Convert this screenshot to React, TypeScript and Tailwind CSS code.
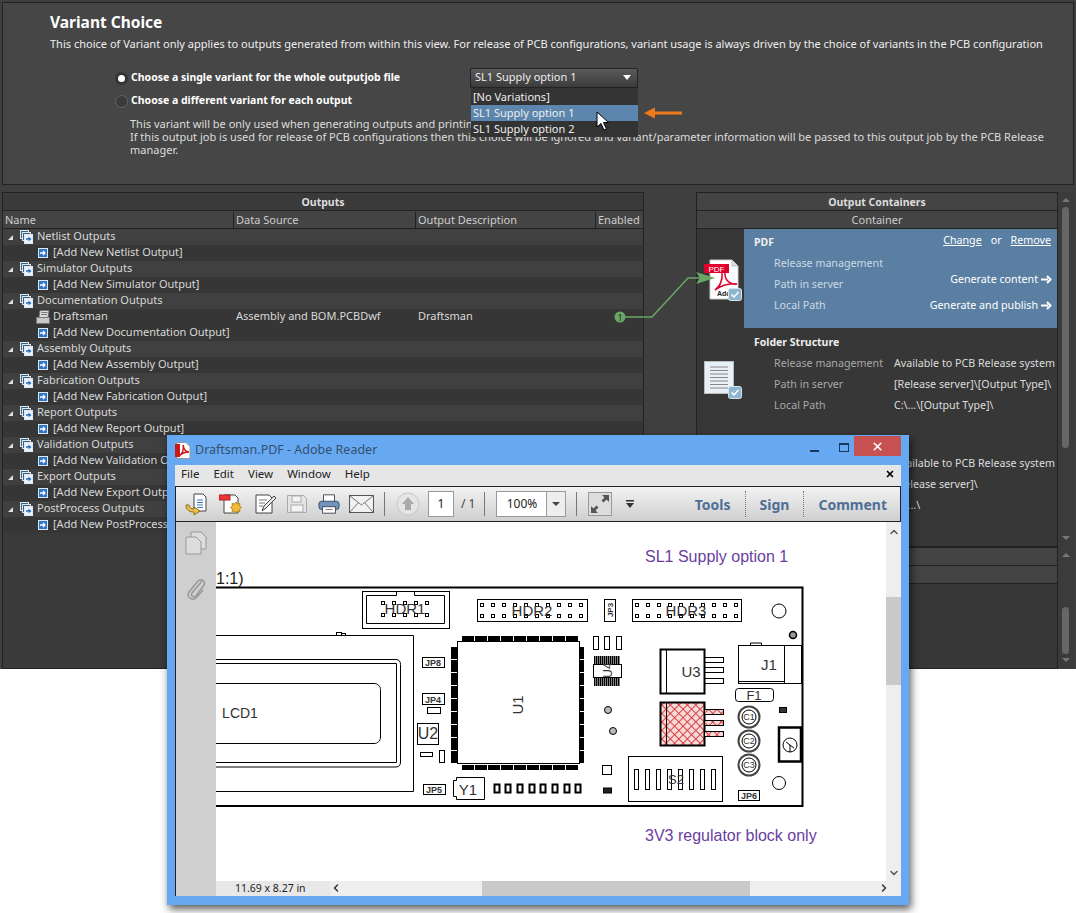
import { ChevronDown, ChevronLeft, ChevronRight, ChevronUp, X } from 'lucide-react';

const font = 'font-["Noto_Sans",sans-serif]';

const outputGroups = [
  { name: 'Netlist Outputs', add: '[Add New Netlist Output]' },
  { name: 'Simulator Outputs', add: '[Add New Simulator Output]' },
  { name: 'Documentation Outputs', add: '[Add New Documentation Output]', draftsman: true },
  { name: 'Assembly Outputs', add: '[Add New Assembly Output]' },
  { name: 'Fabrication Outputs', add: '[Add New Fabrication Output]' },
  { name: 'Report Outputs', add: '[Add New Report Output]' },
  { name: 'Validation Outputs', add: '[Add New Validation Output]' },
  { name: 'Export Outputs', add: '[Add New Export Output]' },
  { name: 'PostProcess Outputs', add: '[Add New PostProcess Output]' },
];

const GroupIcon = () => (
  <svg width="13" height="14" viewBox="0 0 13 14" className="shrink-0">
    <rect x="0.5" y="0.5" width="8" height="8" fill="#3c5f86" stroke="#dfe7ef" />
    <rect x="2.5" y="2.5" width="8" height="8" fill="#3c5f86" stroke="#dfe7ef" />
    <rect x="4.5" y="4.5" width="8" height="9" fill="#e8f0f8" stroke="#dfe7ef" />
    <path d="M6 9h4M8.5 7.5 10.5 9l-2 1.5" stroke="#2c6fc0" strokeWidth="1.3" fill="none" />
  </svg>
);

const AddIcon = () => (
  <svg width="10" height="10" viewBox="0 0 10 10" className="shrink-0">
    <rect width="10" height="10" fill="#dce8f5" />
    <rect x="1" y="1" width="8" height="8" fill="#2f76c4" />
    <path d="M2 5h5M5 3l2 2-2 2" stroke="#fff" strokeWidth="1.3" fill="none" />
  </svg>
);

const DraftsmanIcon = () => (
  <svg width="15" height="14" viewBox="0 0 15 14" className="shrink-0">
    <path d="M4 .5h9l-1 7H3z" fill="#ddd" stroke="#777" />
    <path d="M5.5 2.5h6M5 4.5h6" stroke="#777" />
    <rect x="0.5" y="7.5" width="13" height="6" fill="#c8c8c8" stroke="#777" />
  </svg>
);

const CheckBadge = () => (
  <svg width="14" height="13" viewBox="0 0 14 13" className="absolute bottom-0 right-0">
    <rect x="0.5" y="0.5" width="13" height="12" rx="2" fill="#8fb6cf" stroke="#d5e4ee" />
    <path d="M3.5 6.5 6 9l4.5-5" stroke="#fff" strokeWidth="1.5" fill="none" />
  </svg>
);

const PdfFileIcon = () => (
  <div className="relative h-[42px] w-[38px]">
    <svg width="38" height="42" viewBox="0 0 38 42">
      <path d="M6 1h22l6 6v33H6z" fill="#fff" stroke="#ccc" />
      <path d="M28 1v6h6" fill="#ddd" stroke="#bbb" />
      <rect x="0" y="5" width="25" height="9" fill="#e0002b" />
      <text x="12.5" y="12.5" textAnchor="middle" fontSize="8" fill="#fff" fontFamily="Liberation Sans">PDF</text>
      <path d="M11 31c5-3 8-11 7-17 0-3 3-2 3 1 0 6 5 11 12 10-8-1-15 1-22 6z" fill="none" stroke="#e0002b" strokeWidth="1.5" />
      <text x="13" y="37" fontSize="7" fontWeight="700" fill="#222" fontFamily="Liberation Sans">Adob</text>
    </svg>
    <CheckBadge />
  </div>
);

const DocFileIcon = () => (
  <div className="relative h-[38px] w-[38px]">
    <svg width="38" height="38" viewBox="0 0 38 38">
      <rect x="0.5" y="0.5" width="29" height="32" fill="#e9f1f8" stroke="#bbb" />
      <path d="M6 6h18M6 9.5h18M6 13h18M6 16.500h18M6 20h18M6 23.500h18M6 27h18" stroke="#888" />
    </svg>
    <CheckBadge />
  </div>
);

const ArrowRight = () => (
  <svg width="11" height="9" viewBox="0 0 11 9" className="ml-[3px]">
    <path d="M0 4.500h7M6 1l3.500 3.500L6 8" stroke="#fff" strokeWidth="2" fill="none" />
  </svg>
);

const ContainerSection = ({
  title,
  labels,
  values,
  selected,
  icon,
}: {
  title: string;
  labels: string[];
  values: string[];
  selected?: boolean;
  icon: React.ReactNode;
}) => (
  <div className="flex h-[100px] bg-[#373737]">
    <div className="flex w-[47px] shrink-0 items-center justify-center pl-[4px] pt-[2px]">{icon}</div>
    <div className={`relative flex-1 pl-[10px] pt-[3px] ${selected ? 'h-[99px] bg-[#5a7fa3]' : ''}`}>
      <div className="h-[21px] text-[10.500px] font-bold leading-[21px] text-[#eee]">{title}</div>
      <div className="flex flex-col pl-[20px]">
        {values.map((value, i) => (
          <div key={i} className="flex h-[21px] items-center text-[10.700px]">
            <span className={`w-[120px] ${selected ? 'text-[#cdd8e3]' : 'text-[#a8a8a8]'}`}>{labels[i]}</span>
            <span className="whitespace-nowrap text-[#ddd]">{value}</span>
          </div>
        ))}
      </div>
      {selected && (
        <>
          <div className="absolute right-[6px] top-[2px] flex h-[18px] items-center gap-[9px] text-[10.700px] text-white">
            <span className="underline">Change</span>
            <span>or</span>
            <span className="underline">Remove</span>
          </div>
          <div className="absolute right-[5px] top-[42px] flex items-center text-[10.700px] text-white">
            Generate content
            <ArrowRight />
          </div>
          <div className="absolute right-[5px] top-[68px] flex items-center text-[10.700px] text-white">
            Generate and publish
            <ArrowRight />
          </div>
        </>
      )}
    </div>
  </div>
);

const Scrollbar = ({ thumbTop, thumbHeight }: { thumbTop: number; thumbHeight: number }) => (
  <div className="relative w-[16px] shrink-0 bg-[#3b3b3b]">
    <div
      className="absolute left-[4px] w-[7px] rounded bg-[#666]"
      style={{ top: thumbTop, height: thumbHeight }}
    />
    <div className="absolute left-[4px] top-[6px] h-0 w-0 border-x-[4px] border-b-[4px] border-x-transparent border-b-[#777]" />
    <div className="absolute bottom-[7px] left-[4px] h-0 w-0 border-x-[4px] border-t-[4px] border-x-transparent border-t-[#777]" />
  </div>
);

const Board = () => {
  const pads = (x: number, y: number, n: number) =>
    Array.from({ length: n }, (_, i) => (
      <rect key={`${x}-${y}-${i}`} x={x + i * 11 - 1.5} y={y - 1.5} width="3" height="3" fill="#fff" stroke="#000" />
    ));
  const u1Top = [462, 475, 488, 501, 514, 527, 540, 553, 566];
  const u1Side = [647, 660, 673, 686, 699, 712, 725, 738, 751];
  const smalls = [497, 508, 520, 532, 543, 555, 567, 578];
  const slots = [635, 646, 657, 668, 679, 690, 701, 712];
  return (
    <svg width="590" height="224" viewBox="216 585 590 224" className="block" fontFamily="Liberation Sans">
      <defs>
        <pattern id="hatch" width="6" height="6" patternUnits="userSpaceOnUse" patternTransform="rotate(45)">
          <rect width="6" height="6" fill="#f6d9d9" />
          <path d="M0 0H6M0 0V6" stroke="#d9413f" strokeWidth="2" />
        </pattern>
      </defs>
      <g fill="none" stroke="#000">
        <path d="M216 587.500H802.500V806H216" strokeWidth="2" />

        <rect x="362.500" y="591.500" width="87" height="37" />
        <path d="M396.500 591.500v4h-30v28h78v-28h-30v-4" />
        {pads(383, 603, 5)}
        {pads(383, 615, 5)}

        <rect x="477.500" y="599.500" width="110" height="22" />
        {pads(482, 605, 10)}
        {pads(482, 616, 10)}
        <rect x="604.500" y="599.500" width="11" height="22" />
        <rect x="632.500" y="599.500" width="109" height="22" />
        {pads(637, 605, 10)}
        {pads(637, 616, 10)}

        <circle cx="779" cy="611" r="7" />
        <circle cx="793" cy="635" r="3.500" fill="#999" strokeWidth="1.500" />

        <rect x="336.500" y="632.500" width="5" height="3" />
        <rect x="341.500" y="633.500" width="4" height="2" />
        <path d="M216 635.500H413.500V791.500H216" />
        <path d="M216 659.500H396c3 0 4.500 2 4.500 5V762c0 3-1.500 5-4.500 5H216" />
        <path d="M216 663.500H396.500V762.500H216" />
        <path d="M216 683.500H374c4 0 6.500 3 6.500 6V737c0 4-3 6.500-6.500 6.500H216" />

        <rect x="422.500" y="657.500" width="22" height="10" />
        <rect x="422.500" y="693.500" width="22" height="11" />
        <rect x="427.500" y="707.500" width="13" height="6" />
        <rect x="417.500" y="723.500" width="21" height="21" />
        <rect x="420.500" y="752.500" width="12" height="4" />
        <rect x="439.500" y="750.500" width="5" height="12" />
        <rect x="423.500" y="784.500" width="22" height="10" />
        <path d="M453.500 780.500h3v-3h28v22h-28v-3h-3z" />

        <rect x="457.500" y="641.500" width="122" height="122" />

        {smalls.map((x) => (
          <rect key={x} x={x - 2.500} y="784.500" width="5" height="8" strokeWidth="2" />
        ))}
        {[596, 607, 619].map((x) => (
          <rect key={x} x={x - 2.500} y="636.500" width="5" height="13" />
        ))}
        <rect x="593.500" y="664.500" width="28" height="13" />

        <rect x="660.500" y="649.500" width="44" height="44" strokeWidth="2" />
        <path d="M666.500 649v44" />
        {[660, 670, 681].map((y) => (
          <rect key={y} x="704.500" y={y - 2.500} width="19" height="5" />
        ))}
        <rect x="660.500" y="702.500" width="44" height="43" fill="url(#hatch)" strokeWidth="2" />
        <path d="M666.500 702v44" />
        {[712, 723, 734].map((y) => (
          <rect key={y} x="704.500" y={y - 2.500} width="19" height="5" fill="url(#hatch)" />
        ))}

        <rect x="738.500" y="645.500" width="63" height="38" />
        <path d="M784.500 645v38M738 681.500h46M750.500 645v-2h11v2" />
        <rect x="735.500" y="688.500" width="38" height="13" rx="3" />
        {[717, 741, 765].map((y) => (
          <g key={y}>
            <circle cx="749" cy={y} r="10.500" stroke="#444" strokeWidth="2" />
            <circle cx="749" cy={y} r="7" />
          </g>
        ))}
        <rect x="779" y="727.500" width="22" height="34" strokeWidth="2.500" />
        <circle cx="790" cy="745" r="7" />
        <path d="M790 745v7M786 742l8 6" />
        <rect x="779.500" y="707.500" width="7" height="5" fill="#333" />

        <rect x="628.500" y="756.500" width="94" height="45" />
        {slots.map((x) => (
          <rect key={x} x={x - 0.500} y="769.500" width="4" height="20" />
        ))}
        <rect x="738.500" y="790.500" width="21" height="10" />
        <circle cx="779" cy="783" r="6.500" />
        <circle cx="608" cy="710" r="3.500" fill="#bbb" />
        <circle cx="613" cy="731" r="3.500" fill="#bbb" />
        <rect x="602.500" y="765.500" width="9" height="9" />
        <rect x="603.500" y="788" width="8" height="5" fill="#222" />
      </g>

      <g fill="#000">
        {u1Top.map((x) => (
          <g key={x}>
            <rect x={x} y="636" width="12" height="5" />
            <rect x={x} y="765" width="12" height="5" />
          </g>
        ))}
        {u1Side.map((y) => (
          <g key={y}>
            <rect x="451" y={y} width="6" height="12" />
            <rect x="580" y={y} width="4" height="12" />
          </g>
        ))}
        {Array.from({ length: 13 }, (_, i) => (
          <g key={i}>
            <rect x={594 + i * 2} y="656" width="1.500" height="8" />
            <rect x={594 + i * 2} y="678" width="1.500" height="8" />
          </g>
        ))}
      </g>

      <g fill="#333" stroke="none" textAnchor="middle">
        <text x="405" y="614" fontSize="15">HDR1</text>
        <text x="532" y="616" fontSize="15">HDR2</text>
        <text x="686" y="616" fontSize="15">HDR3</text>
        <text x="433" y="666" fontSize="9" fontWeight="700">JP8</text>
        <text x="433" y="703" fontSize="9" fontWeight="700">JP4</text>
        <text x="434" y="793" fontSize="9" fontWeight="700">JP5</text>
        <text x="749" y="799" fontSize="9" fontWeight="700">JP6</text>
        <text x="428" y="739" fontSize="16">U2</text>
        <text x="468" y="795" fontSize="15">Y1</text>
        <text x="691" y="677" fontSize="15">U3</text>
        <text x="769" y="670" fontSize="15">J1</text>
        <text x="754" y="700" fontSize="13">F1</text>
        <text x="676" y="784" fontSize="13">S2</text>
        <text x="240" y="718" fontSize="14">LCD1</text>
        <text x="749" y="720" fontSize="9">C1</text>
        <text x="749" y="744" fontSize="9">C2</text>
        <text x="749" y="768" fontSize="9">C3</text>
        <text transform="translate(523 705) rotate(-90)" fontSize="15">U1</text>
        <text transform="translate(613 610) rotate(-90)" fontSize="8" fontWeight="700">JP3</text>
        <text transform="translate(612 670) rotate(-90)" fontSize="12">U4</text>
      </g>
    </svg>
  );
};

const ToolbarIcons = () => (
  <>
    <svg width="24" height="24" viewBox="0 0 24 24" className="ml-[9px]">
      <path d="M9 2h9l3 3v14H9z" fill="#fff" stroke="#444" />
      <path d="M12 8h6M12 10.500h6M12 13h6M12 15.500h6" stroke="#3a78c2" />
      <path d="M1 13c0 5 3 7 8 7v3l6-4-6-4v2c-3 0-5-1-5-4z" fill="#f0c04a" stroke="#8a6d1f" />
    </svg>
    <svg width="24" height="24" viewBox="0 0 24 24" className="ml-[10px]">
      <path d="M5 3h11l3 3v15H5z" fill="#fff" stroke="#444" />
      <rect x="0" y="3" width="11" height="5" fill="#e33" stroke="#a22" />
      <path d="m18 13 1.500 2 2.500-.5-.5 2.500 2 1.500-2 1.500.5 2.500-2.500-.5-1.500 2-1.500-2-2.500.5.5-2.500-2-1.500 2-1.500-.5-2.500 2.500.5z" fill="#f0b93a" stroke="#b58a1c" transform="translate(-1 -3)" />
    </svg>
    <svg width="24" height="24" viewBox="0 0 24 24" className="ml-[10px]">
      <path d="M3 3h13l3 3v15H3z" fill="#fff" stroke="#444" />
      <path d="M6 8h8M6 11h6M6 14h4" stroke="#777" />
      <path d="m9 19 2-5L21 4l2 2-10 10z" fill="#e8e8e8" stroke="#444" />
    </svg>
    <svg width="22" height="22" viewBox="0 0 22 22" className="ml-[9px]">
      <path d="M1.500 2.500h16l3 3v14h-19z" fill="#e4e4e4" stroke="#aaa" />
      <rect x="6" y="3" width="9" height="6" fill="#f4f4f4" stroke="#aaa" />
      <rect x="5" y="12" width="12" height="7" fill="#f4f4f4" stroke="#aaa" />
    </svg>
    <svg width="22" height="22" viewBox="0 0 24 24" className="ml-[10px]">
      <path d="M6 10V2h12v8" fill="#fff" stroke="#445" />
      <rect x="1" y="9" width="22" height="9" rx="3" fill="#6f93ba" stroke="#334a66" />
      <rect x="5" y="15" width="14" height="7" fill="#fff" stroke="#445" />
      <path d="M8 18h8" stroke="#777" />
    </svg>
    <svg width="25" height="18" viewBox="0 0 25 18" className="ml-[9px]">
      <rect x="0.500" y="0.500" width="24" height="17" fill="#f1f1f1" stroke="#555" />
      <path d="m1 1 11.500 9L24 1M1 17l8-9M24 17l-8-9" stroke="#777" fill="none" />
    </svg>
    <div className="ml-[10px] h-[24px] w-px bg-[#777]" />
    <svg width="24" height="24" viewBox="0 0 24 24" className="ml-[11px]">
      <circle cx="12" cy="12" r="11" fill="#e4e4e4" stroke="#c6c6c6" />
      <path d="M12 5l6 7h-3v6H9v-6H6z" fill="#aaa" />
    </svg>
  </>
);

export default function App() {
  const labels = ['Release management', 'Path in server', 'Local Path'];
  return (
    <div className={`relative h-[913px] w-[1076px] overflow-hidden bg-white ${font}`}>
      <div className="flex h-[669px] flex-col bg-[#3f3f3f] p-[2px] pb-0 text-[11px] text-[#d8d8d8]">
        <section className="relative h-[183px] shrink-0 border border-[#222] bg-[#464646] pl-[47px] pt-[9px]">
          <h1 className="text-[15.500px] font-bold leading-[20px] text-white">Variant Choice</h1>
          <p className="mt-[4px] whitespace-nowrap text-[11.030px] leading-[16px] text-[#eee]">
            This choice of Variant only applies to outputs generated from within this view. For release of PCB
            configurations, variant usage is always driven by the choice of variants in the PCB configuration
          </p>
          <div className="ml-[65px] mt-[18px] flex flex-col gap-[7px] text-[10.500px] font-bold text-white">
            <label className="flex h-[16px] items-center gap-[3px]">
              <span className="flex h-[13px] w-[13px] items-center justify-center rounded-full bg-[#333]">
                <span className="h-[7px] w-[7px] rounded-full bg-white" />
              </span>
              Choose a single variant for the whole outputjob file
            </label>
            <label className="flex h-[16px] items-center gap-[3px]">
              <span className="h-[13px] w-[13px] rounded-full border border-[#666] bg-[#3a3a3a]" />
              Choose a different variant for each output
            </label>
          </div>
          <p className="ml-[80px] mt-[8px] w-[925px] text-[11px] leading-[13px] text-[#ddd]">
            This variant will be only used when generating outputs and printing from within this view.
            <br />
            If this output job is used for release of PCB configurations then this choice will be ignored and
            variant/parameter information will be passed to this output job by the PCB Release manager.
          </p>
        </section>

        <div className="mt-[7px] flex min-h-0 flex-1">
          <section className="flex w-[642px] shrink-0 flex-col border border-[#222] bg-[#3a3a3a]">
            <div className="h-[18px] shrink-0 border-b border-[#222] text-center text-[10.500px] font-bold leading-[19px] text-[#ddd]">
              Outputs
            </div>
            <div className="flex h-[18px] shrink-0 items-center border-b border-[#222] bg-[#444] pt-[2px] text-[11px] text-[#ccc]">
              <span className="w-[230px] pl-[2px]">Name</span>
              <span className="w-[182px] border-l border-[#222] pl-[2px]">Data Source</span>
              <span className="w-[180px] border-l border-[#222] pl-[2px]">Output Description</span>
              <span className="flex-1 border-l border-[#222] pl-[2px]">Enabled</span>
            </div>
            {outputGroups.map((group) => (
              <div key={group.name} className="text-[11px]">
                <div className="flex h-[16px] items-center bg-[#404040] pl-[5px]">
                  <span className="h-0 w-0 border-b-[5px] border-l-[5px] border-b-[#ddd] border-l-transparent" />
                  <span className="ml-[7px] flex"><GroupIcon /></span>
                  <span className="ml-[4px] pb-[2px]">{group.name}</span>
                </div>
                {group.draftsman && (
                  <div className="flex h-[16px] items-center bg-[#363636]">
                    <span className="ml-[33px] flex w-[15px]"><DraftsmanIcon /></span>
                    <span className="ml-[2px] w-[183px] pb-[2px]">Draftsman</span>
                    <span className="w-[182px] pb-[2px]">Assembly and BOM.PCBDwf</span>
                    <span className="pb-[2px]">Draftsman</span>
                  </div>
                )}
                <div className="flex h-[16px] items-center bg-[#363636] pl-[35px]">
                  <AddIcon />
                  <span className="ml-[5px] pb-[2px]">{group.add}</span>
                </div>
              </div>
            ))}
          </section>

          <div className="w-[52px] shrink-0" />

          <div className="flex min-w-0 flex-1 flex-col">
            <div className="flex h-[355px] shrink-0">
              <section className="flex flex-1 flex-col border border-[#222] bg-[#373737]">
                <div className="h-[18px] shrink-0 border-b border-[#222] bg-[#444] text-center text-[10.500px] font-bold leading-[19px] text-[#ddd]">
                  Output Containers
                </div>
                <div className="h-[18px] shrink-0 border-b border-[#222] bg-[#444] text-center text-[11px] leading-[18px] text-[#ccc]">
                  Container
                </div>
                <ContainerSection title="PDF" labels={labels} values={['', '', '']} selected icon={<PdfFileIcon />} />
                <ContainerSection
                  title="Folder Structure"
                  labels={labels}
                  values={['Available to PCB Release system', '[Release server]\\[Output Type]\\', 'C:\\...\\[Output Type]\\']}
                  icon={<DocFileIcon />}
                />
                <ContainerSection
                  title=""
                  labels={['', '', '']}
                  values={['Available to PCB Release system', '[Release server]\\', 'C:\\...\\']}
                  icon={<DocFileIcon />}
                />
              </section>
              <Scrollbar thumbTop={15} thumbHeight={241} />
            </div>
            <div className="flex min-h-0 flex-1">
              <section className="flex flex-1 flex-col border border-[#222] bg-[#373737]">
                <div className="h-[18px] shrink-0 border-b border-[#222] bg-[#444]" />
                <div className="h-[18px] shrink-0 border-b border-[#222] bg-[#444]" />
              </section>
              <Scrollbar thumbTop={60} thumbHeight={47} />
            </div>
          </div>
        </div>
      </div>

      {/* combo box and its open list */}
      <div className="absolute left-[470px] top-[68px] w-[168px] text-[11px] text-[#eee]">
        <div className="flex h-[20px] items-center justify-between rounded-t-[2px] border border-[#222] bg-gradient-to-b from-[#5a5a5a] to-[#3c3c3c] pb-[1px] pl-[4px] pr-[6px]">
          SL1 Supply option 1
          <span className="h-0 w-0 border-x-[4px] border-t-[5px] border-x-transparent border-t-white" />
        </div>
        <div className="ml-px bg-[#333] pt-[1px]">
          <div className="flex h-[16px] items-center pl-[2px]">[No Variations]</div>
          <div className="flex h-[16px] items-center bg-[#5c86ad] pl-[2px]">SL1 Supply option 1</div>
          <div className="flex h-[16px] items-center pl-[2px]">SL1 Supply option 2</div>
        </div>
      </div>
      <svg width="14" height="20" viewBox="0 0 14 20" className="absolute left-[596px] top-[111px]">
        <path d="M1 1v15l4-3.500 3 6.500 2.500-1-3-6.500H12.500z" fill="#fff" stroke="#000" />
      </svg>
      <svg width="40" height="14" viewBox="0 0 40 14" className="absolute left-[644px] top-[106px]">
        <path d="M0 7 11 1.500v4h27v3H11v4z" fill="#f07a1a" />
      </svg>

      {/* link between the enabled output and the container */}
      <svg width="110" height="60" viewBox="610 270 110 60" className="absolute left-[610px] top-[270px]">
        <path d="M625 317h27l36-39h20" fill="none" stroke="#6aa566" strokeWidth="1.500" />
        <path d="M696 272l19 6-19 6 4-6z" fill="#6aa566" />
        <circle cx="620" cy="317" r="5.500" fill="#6aa566" />
        <text x="620" y="320.500" textAnchor="middle" fontSize="9" fill="#163016" fontFamily="Noto Sans">1</text>
      </svg>

      {/* Adobe Reader window */}
      <div className="absolute left-[167px] top-[435px] flex h-[470px] w-[742px] flex-col bg-[#66a8f2] px-[8px] pb-[9px] shadow-[2px_4px_8px_rgba(0,0,0,0.65)]">
        <div className="relative flex h-[30px] shrink-0 items-center">
          <svg width="16" height="17" viewBox="0 0 16 17" className="shrink-0">
            <path d="M2 .5h9l4 4v12H2z" fill="#fff" stroke="#999" />
            <rect x="0" y="2" width="5" height="13" fill="#c91a1a" />
            <path d="M4 14c3-2 5-6 4-11 1 5 3 7 6 7-4 0-7 1-10 4z" fill="none" stroke="#d01818" strokeWidth="1.400" />
          </svg>
          <span className="ml-[4px] text-[12.500px] text-[#35506e]">Draftsman.PDF - Adobe Reader</span>
          <div className="absolute right-0 top-[1px] flex items-start">
            <span className="mr-[20px] mt-[14px] h-[2px] w-[9px] bg-[#18375c]" />
            <span className="mr-[5px] mt-[7px] h-[9px] w-[10px] border border-t-2 border-[#18375c]" />
            <span className="flex h-[20px] w-[47px] items-center justify-center bg-[#c75050]">
              <X size={13} strokeWidth={3} color="#fff" />
            </span>
          </div>
        </div>

        <div className="flex h-[21px] shrink-0 items-center justify-between bg-[#e6e6e6] px-[6px] pb-[3px] text-[11.500px] text-[#222]">
          <div className="flex gap-[14px]">
            <span>File</span>
            <span>Edit</span>
            <span>View</span>
            <span>Window</span>
            <span>Help</span>
          </div>
          <X size={10} strokeWidth={4} color="#000" />
        </div>

        <div className="flex h-[36px] shrink-0 items-center border border-[#222] bg-gradient-to-b from-[#f2f2f2] to-[#cfcfcf]">
          <ToolbarIcons />
          <div className="ml-[8px] flex h-[26px] w-[26px] items-center justify-center border border-[#999] bg-white text-[12px] text-[#222]">
            1
          </div>
          <span className="ml-[7px] text-[12px] text-[#444]">/ 1</span>
          <div className="ml-[9px] h-[24px] w-px bg-[#777]" />
          <div className="ml-[11px] flex h-[26px] w-[70px] items-center border border-[#999] bg-white text-[12px] text-[#222]">
            <span className="w-[49px] text-center">100%</span>
            <span className="flex h-full flex-1 items-center justify-center border-l border-[#999] bg-[#eee]">
              <span className="h-0 w-0 border-x-[4px] border-t-[4px] border-x-transparent border-t-[#444]" />
            </span>
          </div>
          <div className="ml-[10px] h-[24px] w-px bg-[#777]" />
          <svg width="24" height="24" viewBox="0 0 24 24" className="ml-[11px]">
            <rect x="0.500" y="0.500" width="23" height="23" fill="#ddd" stroke="#999" />
            <path d="M14 3h7v7l-2.500-2.500-3 3-2-2 3-3zM10 21H3v-7l2.500 2.500 3-3 2 2-3 3z" fill="#555" />
          </svg>
          <svg width="8" height="8" viewBox="0 0 8 8" className="ml-[14px]">
            <path d="M0 0h8v1.500H0zM0 3h8L4 8z" fill="#333" />
          </svg>
          <div className="ml-auto flex h-full items-center pr-[13px] text-[14px] font-bold text-[#4f6f96]">
            <span>Tools</span>
            <span className="mx-[14px] h-[26px] border-l border-dotted border-[#777]" />
            <span>Sign</span>
            <span className="mx-[14px] h-[26px] border-l border-dotted border-[#777]" />
            <span>Comment</span>
          </div>
        </div>

        <div className="flex min-h-0 flex-1 border-l border-[#222]">
          <div className="flex w-[40px] shrink-0 flex-col items-center gap-[22px] bg-[#cfcfcf] pt-[9px]">
            <svg width="22" height="24" viewBox="0 0 22 24">
              <path d="M6 1h10l5 5v12H6z" fill="#ddd" stroke="#999" />
              <path d="M1 6h10l5 5v12H1z" fill="#ddd" stroke="#999" />
            </svg>
            <svg width="20" height="24" viewBox="0 0 20 24">
              <path d="M16 5 6 17c-2 3 2 5 4 3L18 9c2-4-3-7-6-4L3 16c-3 5 3 9 7 6l7-8" fill="none" stroke="#999" strokeWidth="1.500" transform="translate(0 -1)" />
            </svg>
          </div>

          <div className="flex min-w-0 flex-1 flex-col">
            <div className="flex min-h-0 flex-1">
              <div className="min-w-0 flex-1 overflow-hidden bg-white font-['Liberation_Sans',sans-serif]">
                <div className="ml-[429px] mt-[26px] whitespace-nowrap text-[16px] leading-[18px] text-[#6a3ea1]">
                  SL1 Supply option 1
                </div>
                <div className="-mb-[3px] mt-[4px] text-[16px] leading-[18px] text-[#222]">1:1)</div>
                <Board />
                <div className="ml-[429px] mt-[18px] whitespace-nowrap text-[16px] leading-[18px] text-[#6a3ea1]">
                  3V3 regulator block only
                </div>
              </div>
              <div className="relative w-[15px] shrink-0 bg-[#eee]">
                <ChevronUp size={12} strokeWidth={3} color="#555" className="absolute left-[2px] top-[4px]" />
                <div className="absolute left-0 top-[75px] h-[88px] w-[15px] bg-[#c9c9c9]" />
                <ChevronDown size={12} strokeWidth={3} color="#555" className="absolute bottom-[2px] left-[2px]" />
              </div>
            </div>
            <div className="flex h-[15px] shrink-0 items-center bg-[#eee]">
              <span className="w-[114px] bg-[#e8e8e8] pl-[19px] text-[10.500px] text-[#222]">11.69 x 8.27 in</span>
              <span className="relative h-full flex-1">
                <ChevronLeft size={12} strokeWidth={3} color="#333" className="absolute left-[0px] top-[1px]" />
                <span className="absolute left-[152px] top-0 h-[15px] w-[268px] bg-[#c9c9c9]" />
                <ChevronRight size={12} strokeWidth={3} color="#333" className="absolute right-[11px] top-[1px]" />
              </span>
            </div>
          </div>
        </div>
      </div>
    </div>
  );
}
